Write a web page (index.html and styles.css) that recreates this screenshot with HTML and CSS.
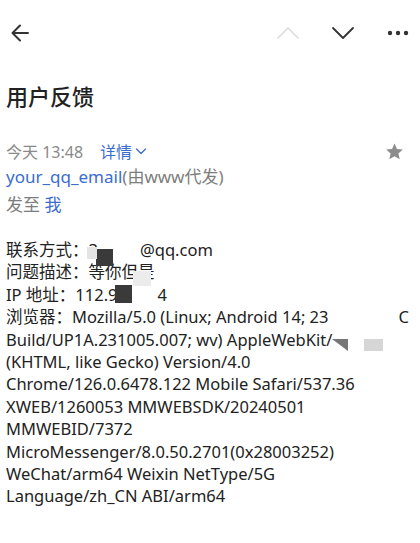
FILE: index.html
```html
<!DOCTYPE html>
<html lang="zh-CN">
<head>
<meta charset="utf-8">
<title>用户反馈</title>
<link rel="stylesheet" href="styles.css">
</head>
<body>
<div class="page">
  <header class="topbar">
    <svg class="icon back" width="20" height="20" viewBox="0 0 20 20"><path d="M18 10H3M10 2.5L2.5 10L10 17.5" fill="none" stroke="#333" stroke-width="2" stroke-linecap="round" stroke-linejoin="round"/></svg>
    <div class="actions">
      <svg class="icon" width="24" height="24" viewBox="0 0 24 24"><path d="M2 17L12 7L22 17" fill="none" stroke="#dcdcdc" stroke-width="1.6" stroke-linecap="round" stroke-linejoin="round"/></svg>
      <svg class="icon" width="24" height="24" viewBox="0 0 24 24"><path d="M2 7L12 17L22 7" fill="none" stroke="#333" stroke-width="1.8" stroke-linecap="round" stroke-linejoin="round"/></svg>
      <svg class="icon" width="24" height="24" viewBox="0 0 24 24"><circle cx="4" cy="12" r="2.2" fill="#333"/><circle cx="12" cy="12" r="2.2" fill="#333"/><circle cx="20" cy="12" r="2.2" fill="#333"/></svg>
    </div>
  </header>

  <h1 class="title">用户反馈</h1>

  <div class="meta">
    <span class="time">今天 13:48</span>
    <span class="detail">详情<svg class="chev" width="12" height="12" viewBox="0 0 12 12"><path d="M1.5 4L6 8.5L10.5 4" fill="none" stroke="#3a6dd0" stroke-width="1.3" stroke-linecap="round" stroke-linejoin="round"/></svg></span>
    <svg class="star" width="19" height="19" viewBox="0 0 24 24"><path d="M12 1.8l3.1 6.9 7.4.7-5.6 5 1.7 7.4L12 17.9l-6.6 3.9 1.7-7.4-5.6-5 7.4-.7z" fill="#8c8c8c"/></svg>
  </div>
  <div class="sender"><span class="link">your_qq_email</span><span class="via">(由www代发)</span></div>
  <div class="to"><span class="label">发至</span> <span class="link">我</span></div>

  <div class="content">
    <div class="line">联系方式：3<span class="gap g1"></span>@qq.com</div>
    <div class="line">问题描述：等你但是</div>
    <div class="line">IP 地址：112.9<span class="gap g2"></span>4</div>
    <div class="line">浏览器：Mozilla/5.0 (Linux; Android 14; 23<span class="gap g3"></span>C</div>
    <div class="line">Build/UP1A.231005.007; wv) AppleWebKit/</div>
    <div class="line">(KHTML, like Gecko) Version/4.0</div>
    <div class="line">Chrome/126.0.6478.122 Mobile Safari/537.36</div>
    <div class="line">XWEB/1260053 MMWEBSDK/20240501</div>
    <div class="line">MMWEBID/7372</div>
    <div class="line">MicroMessenger/8.0.50.2701(0x28003252)</div>
    <div class="line">WeChat/arm64 Weixin NetType/5G</div>
    <div class="line">Language/zh_CN ABI/arm64</div>

    <span class="mosaic m1"></span>
    <span class="mosaic m1b"></span>
    <span class="mosaic m2"></span>
    <span class="mosaic m2b"></span>
    <span class="mosaic m3"></span>
    <span class="mosaic m3b"></span>
  </div>
</div>
</body>
</html>
```

FILE: styles.css
```css
* { box-sizing: border-box; }
html, body { margin: 0; padding: 0; background: #fff; }
body {
  font-family: "Noto Sans", "Noto Sans CJK SC", sans-serif;
  color: #222;
}
.page { width: 420px; padding: 0 6px; }

.topbar {
  height: 66px;
  display: flex;
  align-items: center;
  padding: 0 4px 0 4px;
}
.icon { display: block; }
.actions {
  margin-left: auto;
  display: flex;
  gap: 31px;
  align-items: center;
}

.title {
  margin: 14px 0 0;
  font-size: 22px;
  line-height: 30px;
  font-weight: 500;
  color: #222;
  font-family: "Noto Sans CJK SC", sans-serif;
}

.meta {
  margin-top: 29px;
  height: 24px;
  display: flex;
  align-items: center;
  font-size: 16px;
}
.time { color: #8a8a8a; }
.detail {
  color: #3a6dd0;
  margin-left: 17px;
  display: inline-flex;
  align-items: center;
  gap: 3px;
}
.star { margin-left: auto; margin-right: 10px; }

.sender, .to {
  font-size: 17px;
  line-height: 28px;
}
.link { color: #3a6dd0; }
.via, .label { color: #7d7d7d; }

.content {
  position: relative;
  margin-top: 20px;
  font-size: 16.5px;
  line-height: 22.4px;
  color: #222;
}
.line { white-space: nowrap; }
.gap { display: inline-block; }
.g1 { width: 42px; }
.g2 { width: 40px; }
.g3 { width: 70px; }

.mosaic { position: absolute; display: block; }
.m1 { left: 90px; top: 10px; width: 17px; height: 17px; background: #3a3a3a; }
.m1b { left: 81px; top: 8px; width: 10px; height: 12px; background: #e4e4e4; }
.m2 { left: 109px; top: 46px; width: 17px; height: 18px; background: #3a3a3a; }
.m2b { left: 127px; top: 32px; width: 18px; height: 15px; background: #ececec; }
.m3 { left: 326px; top: 100px; width: 16px; height: 12px; background: #777; clip-path: polygon(0 0, 100% 0, 100% 100%); }
.m3b { left: 358px; top: 100px; width: 19px; height: 12px; background: #d6d6d6; }
```
